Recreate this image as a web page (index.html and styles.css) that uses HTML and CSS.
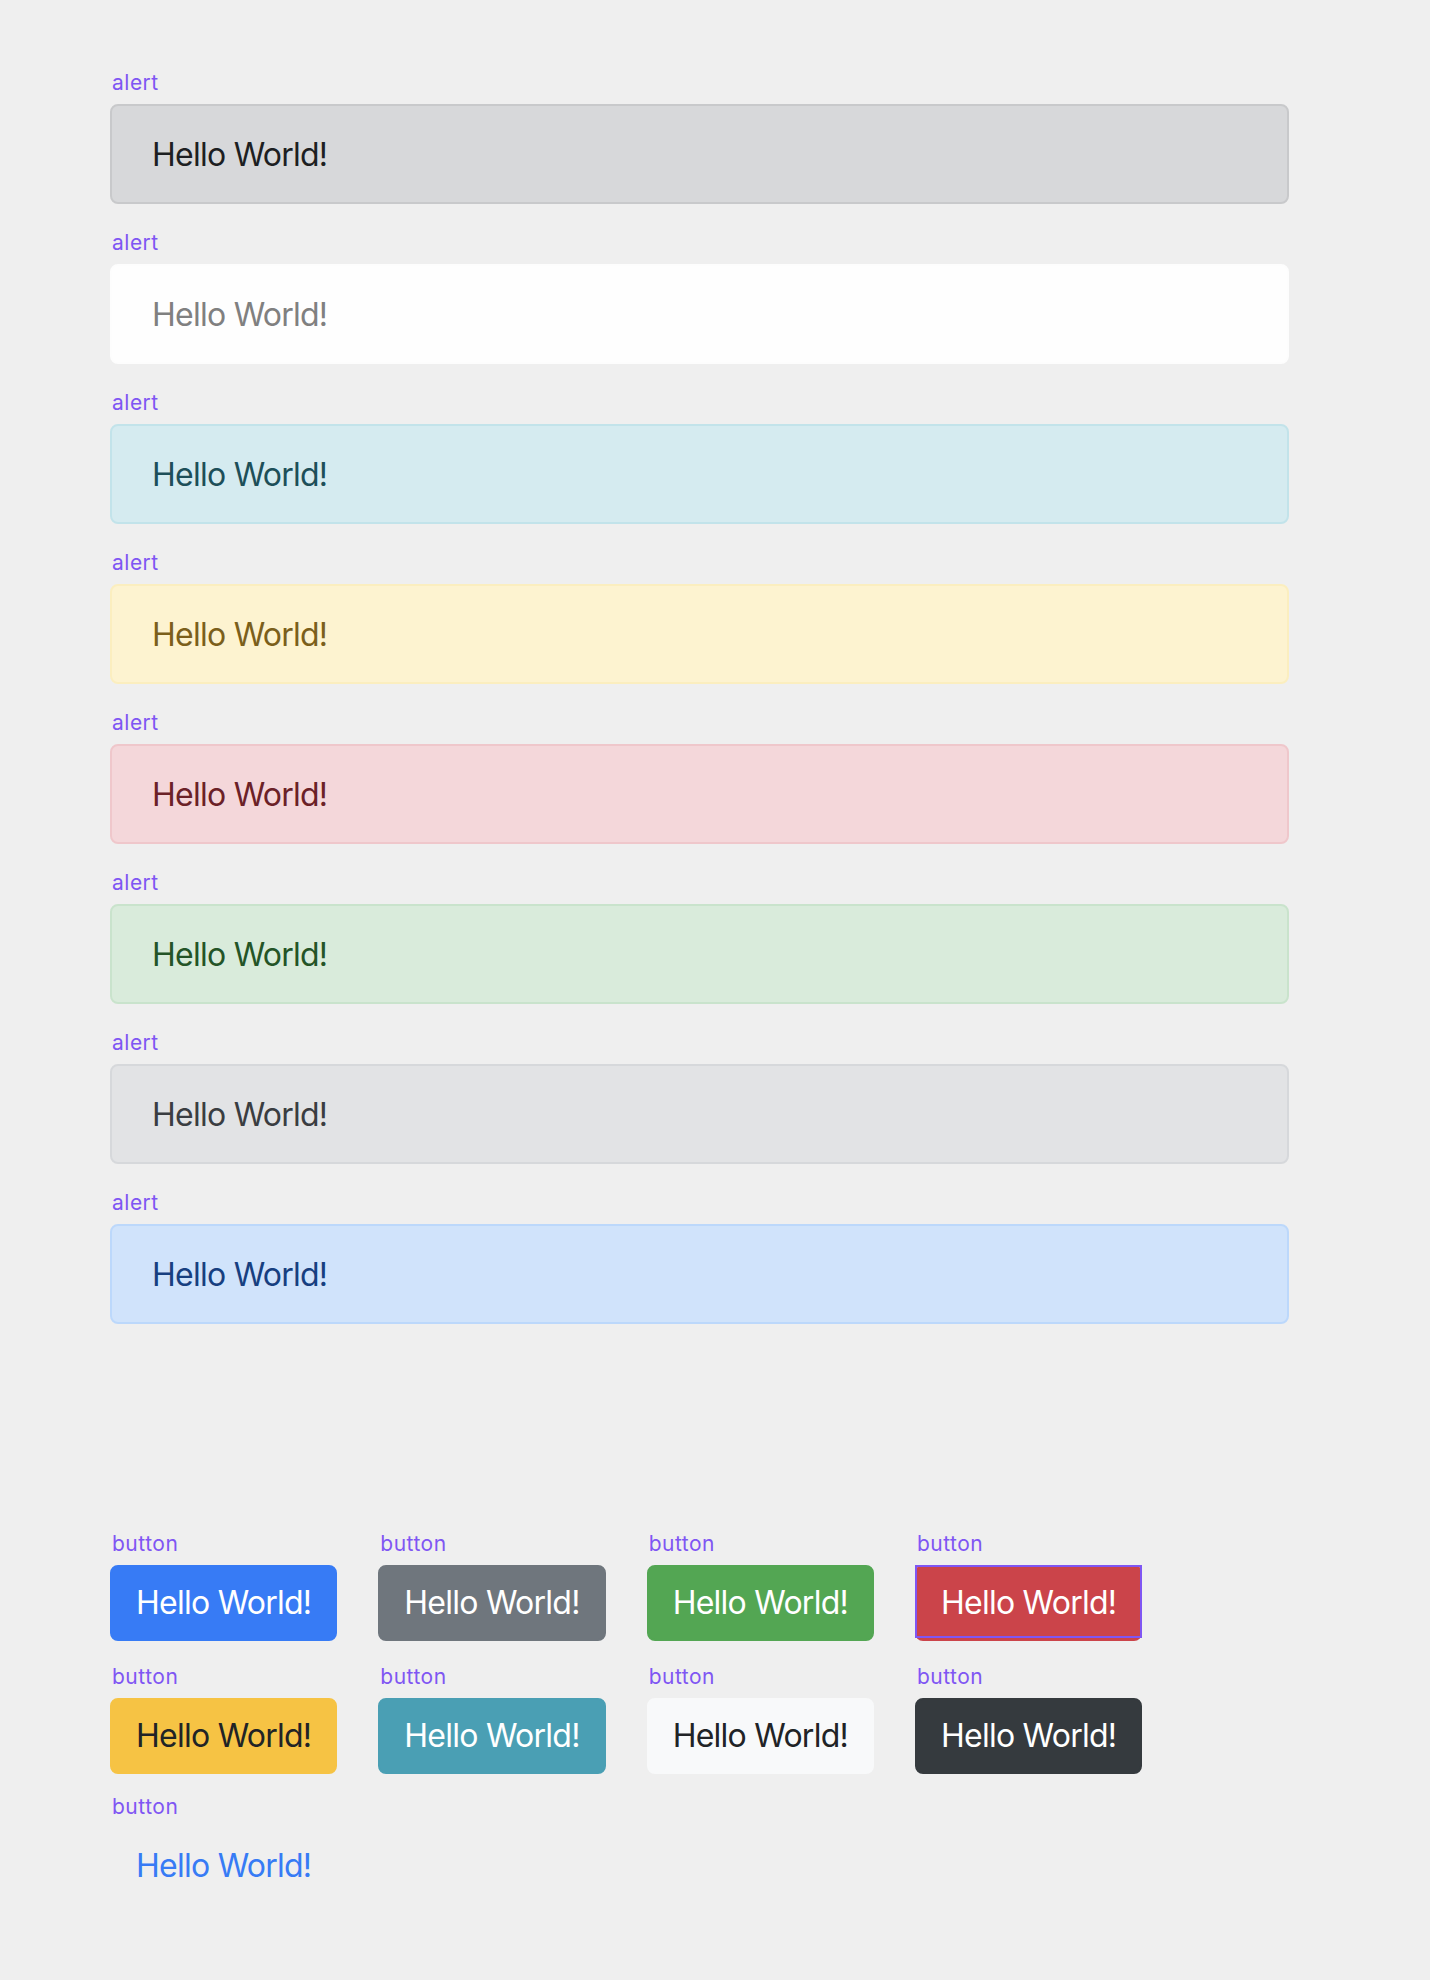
FILE: index.html
```html
<!DOCTYPE html>
<html lang="en">
<head>
<meta charset="utf-8">
<title>Components</title>
<link rel="stylesheet" href="styles.css">
</head>
<body>
<div class="page">
  <section class="alerts">
    <div class="item"><div class="label">alert</div><div class="alert alert-dark">Hello World!</div></div>
    <div class="item"><div class="label">alert</div><div class="alert alert-light">Hello World!</div></div>
    <div class="item"><div class="label">alert</div><div class="alert alert-info">Hello World!</div></div>
    <div class="item"><div class="label">alert</div><div class="alert alert-warning">Hello World!</div></div>
    <div class="item"><div class="label">alert</div><div class="alert alert-danger">Hello World!</div></div>
    <div class="item"><div class="label">alert</div><div class="alert alert-success">Hello World!</div></div>
    <div class="item"><div class="label">alert</div><div class="alert alert-secondary">Hello World!</div></div>
    <div class="item"><div class="label">alert</div><div class="alert alert-primary">Hello World!</div></div>
  </section>
  <section class="buttons">
    <div class="btn-item"><div class="label">button</div><button class="btn btn-primary">Hello World!</button></div>
    <div class="btn-item"><div class="label">button</div><button class="btn btn-secondary">Hello World!</button></div>
    <div class="btn-item"><div class="label">button</div><button class="btn btn-success">Hello World!</button></div>
    <div class="btn-item"><div class="label">button</div><button class="btn btn-danger selected">Hello World!</button></div>
    <div class="btn-item"><div class="label">button</div><button class="btn btn-warning">Hello World!</button></div>
    <div class="btn-item"><div class="label">button</div><button class="btn btn-info">Hello World!</button></div>
    <div class="btn-item"><div class="label">button</div><button class="btn btn-light">Hello World!</button></div>
    <div class="btn-item"><div class="label">button</div><button class="btn btn-dark">Hello World!</button></div>
    <div class="btn-item last-row"><div class="label">button</div><button class="btn btn-link">Hello World!</button></div>
  </section>
</div>
</body>
</html>
```

FILE: styles.css
```css
* { box-sizing: border-box; }

html, body {
  margin: 0;
  background: #efefef;
}

body {
  font-family: Inter, "Noto Sans", "Liberation Sans", sans-serif;
  color: #212529;
}

.page {
  min-height: 1980px;
  padding: 71px 0 0 110px;
}

.label {
  font-size: 21px;
  line-height: 24px;
  letter-spacing: 0.5px;
  color: #7f56f3;
  margin-bottom: 9px;
  padding-left: 2px;
}

.alert {
  width: 1179px;
  padding: 25px 40px 23px;
  border: 2px solid transparent;
  border-radius: 8px;
  font-size: 32px;
  line-height: 48px;
  letter-spacing: -0.75px;
  margin-bottom: 27px;
}

.alert-dark      { background: #d7d8da; border-color: #c8c9cb; color: #1d1f22; }
.alert-light     { background: #fefefe; border-color: #fdfdfd; color: #808080; }
.alert-info      { background: #d5ebf0; border-color: #c2e3ea; color: #1d4f59; }
.alert-warning   { background: #fdf3d0; border-color: #fbeebf; color: #7b5f1b; }
.alert-danger    { background: #f4d7da; border-color: #efc7cb; color: #6b2127; }
.alert-success   { background: #d9ebdb; border-color: #c9e3cc; color: #245427; }
.alert-secondary { background: #e2e3e5; border-color: #d6d8db; color: #3a3d41; }
.alert-primary   { background: #d0e3fb; border-color: #bcd8fb; color: #173f80; }

.alerts {
  padding-bottom: 1px;
}

.buttons {
  margin-top: 180px;
  display: grid;
  grid-template-columns: repeat(4, max-content);
  column-gap: 41px;
  row-gap: 24px;
}

.last-row {
  margin-top: -3px;
}

.btn {
  display: block;
  font-family: inherit;
  font-size: 32px;
  line-height: 48px;
  letter-spacing: -0.75px;
  padding: 12px 24px;
  border: 2px solid transparent;
  border-radius: 8px;
  margin: 0;
  cursor: pointer;
  color: #ffffff;
}

.btn-primary   { background: #377bf5; border-color: #377bf5; }
.btn-secondary { background: #6f767d; border-color: #6f767d; }
.btn-success   { background: #53a653; border-color: #53a653; }
.btn-danger    { background: #cb444a; border-color: #cb444a; }
.btn-warning   { background: #f6c344; border-color: #f6c344; color: #212326; }
.btn-info      { background: #4a9fb4; border-color: #4a9fb4; }
.btn-light     { background: #f8f9fa; border-color: #f8f9fa; color: #212326; }
.btn-dark      { background: #353a3e; border-color: #353a3e; }
.btn-link      { background: transparent; border-color: transparent; color: #377bf5; }

.selected {
  position: relative;
}

.selected::after {
  content: "";
  position: absolute;
  top: -2px;
  left: -2px;
  right: -2px;
  height: 69px;
  border: 2px solid #7f56f3;
  pointer-events: none;
}
```
